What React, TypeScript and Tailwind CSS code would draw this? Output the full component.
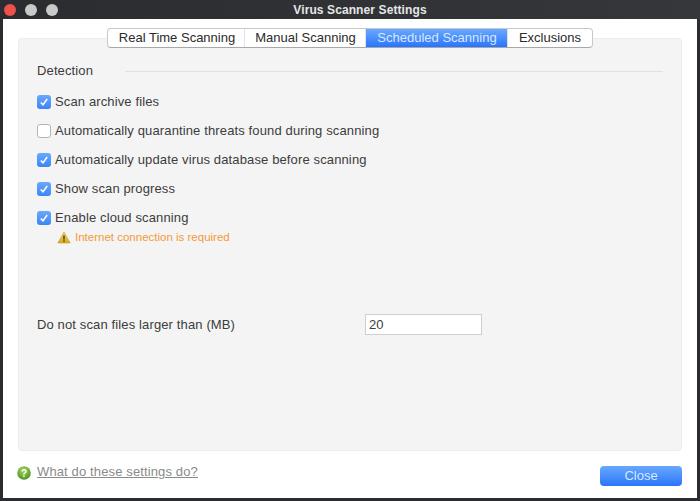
const font = "font-['Liberation_Sans',Arial,sans-serif]";

const tabs = [
  { label: "Real Time Scanning", width: "w-[137px] pl-[2px]" },
  { label: "Manual Scanning", width: "w-[121px] pl-px" },
  { label: "Scheduled Scanning", width: "w-[142px] pl-px", active: true },
  { label: "Exclusions", width: "w-[84px]" },
];

const options = [
  { label: "Scan archive files", checked: true },
  { label: "Automatically quarantine threats found during scanning", checked: false },
  { label: "Automatically update virus database before scanning", checked: true },
  { label: "Show scan progress", checked: true },
  { label: "Enable cloud scanning", checked: true },
];

const Checkbox = ({ checked }: { checked: boolean }) =>
  checked ? (
    <div className="w-[14px] h-[14px] rounded-[3px] bg-gradient-to-b from-[#6aa9fb] to-[#3a84f7] flex items-center justify-center shrink-0">
      <svg width="10" height="10" viewBox="0 0 10 10" fill="none">
        <path d="M1.8 5.4 L4 7.8 L8.2 2" stroke="white" strokeWidth="1.5" />
      </svg>
    </div>
  ) : (
    <div className="w-[14px] h-[14px] rounded-[3px] bg-white border border-[#b4b4b4] shrink-0" />
  );

const TrafficLight = ({ color }: { color: string }) => (
  <div className={`w-[12px] h-[12px] rounded-full ${color}`} />
);

export default function App() {
  return (
    <div className={`w-[700px] h-[501px] bg-[#2a2c30] flex flex-col overflow-hidden text-[13px] text-[#3c3c3c] ${font}`}>
      <div className="h-[19px] shrink-0 relative flex items-center gap-[9px] pl-[4px] bg-gradient-to-r from-[#2a2c30] to-[#35373b]">
        <TrafficLight color="bg-[#f0504a]" />
        <TrafficLight color="bg-[#c9c9c9]" />
        <TrafficLight color="bg-[#c9c9c9]" />
        <div className="absolute inset-0 pl-[20px] flex items-center justify-center text-[12px] font-bold tracking-[0.1px] text-[#e6e6e6]">
          Virus Scanner Settings
        </div>
      </div>

      <div className="ml-[3px] mr-[3px] h-[479px] bg-white flex flex-col px-[15px]">
        <div className="relative z-10 flex justify-center mt-[9px]">
          <div className="flex h-[20px] bg-white rounded-[4px] border border-[#c8c8c8] border-b-[#a8a8a8] overflow-hidden">
            {tabs.map((tab) => (
              <div
                key={tab.label}
                className={`${tab.width} flex items-center justify-center border-r border-[#e2e2e2] last:border-r-0 ${
                  tab.active ? "bg-gradient-to-b from-[#69a8fc] to-[#2a74fb] text-[#d8e8ff]" : "text-[#2a2a2a]"
                }`}
              >
                {tab.label}
              </div>
            ))}
          </div>
        </div>

        <div className="-mt-[10px] h-[413px] bg-[#f4f4f4] border border-[#ececec] rounded-[4px] flex flex-col pl-[18px] pr-[18px] tracking-[0.13px]">
          <div className="flex items-center gap-[32px] mt-[23px] h-[18px]">
            <span>Detection</span>
            <div className="flex-1 h-px bg-[#e0e0e0]" />
          </div>

          <div className="flex flex-col gap-[11px] mt-[13px]">
            {options.map((opt) => (
              <div key={opt.label} className="flex items-center gap-[4px] h-[18px]">
                <Checkbox checked={opt.checked} />
                <span>{opt.label}</span>
              </div>
            ))}
          </div>

          <div className="flex items-center gap-[4px] ml-[20px] mt-[2px] text-[11.5px] tracking-normal text-[#f59a38]">
            <svg width="14" height="13" viewBox="0 0 14 13">
              <defs>
                <linearGradient id="warn" x1="0" y1="0" x2="0" y2="1">
                  <stop offset="0" stopColor="#f6e27a" />
                  <stop offset="1" stopColor="#d9a514" />
                </linearGradient>
              </defs>
              <path d="M7 1 L13.2 12 H0.8 Z" fill="url(#warn)" stroke="#c9a02a" strokeWidth="0.6" strokeLinejoin="round" />
              <rect x="6.3" y="4.4" width="1.4" height="4.2" fill="#3a3320" />
              <rect x="6.3" y="9.4" width="1.4" height="1.4" fill="#3a3320" />
            </svg>
            <span>Internet connection is required</span>
          </div>

          <div className="flex items-center mt-[68px]">
            <span className="w-[328px]">Do not scan files larger than (MB)</span>
            <div className="w-[117px] h-[21px] bg-white border border-[#cfcfcf] flex items-center pl-[3px]">20</div>
          </div>
        </div>

        <div className="flex items-center justify-between mt-[11px]">
          <div className="flex items-center gap-[6px] -ml-[1px] mb-[8px] tracking-[0.13px]">
            <svg width="14" height="14" viewBox="0 0 14 14" className="mt-[3px]">
              <defs>
                <radialGradient id="help" cx="0.45" cy="0.3" r="0.8">
                  <stop offset="0" stopColor="#a6d65a" />
                  <stop offset="1" stopColor="#3f8a1c" />
                </radialGradient>
              </defs>
              <circle cx="7" cy="7" r="6.8" fill="url(#help)" />
              <text x="7" y="10.6" textAnchor="middle" fontSize="10" fontWeight="700" fill="white">?</text>
            </svg>
            <span className="underline text-[#8a8a8a]">What do these settings do?</span>
          </div>
          <div className="w-[82px] h-[20px] rounded-[4px] bg-gradient-to-b from-[#69a8fc] to-[#2a74fb] text-[#d8e8ff] flex items-center justify-center">
            Close
          </div>
        </div>
      </div>
    </div>
  );
}
